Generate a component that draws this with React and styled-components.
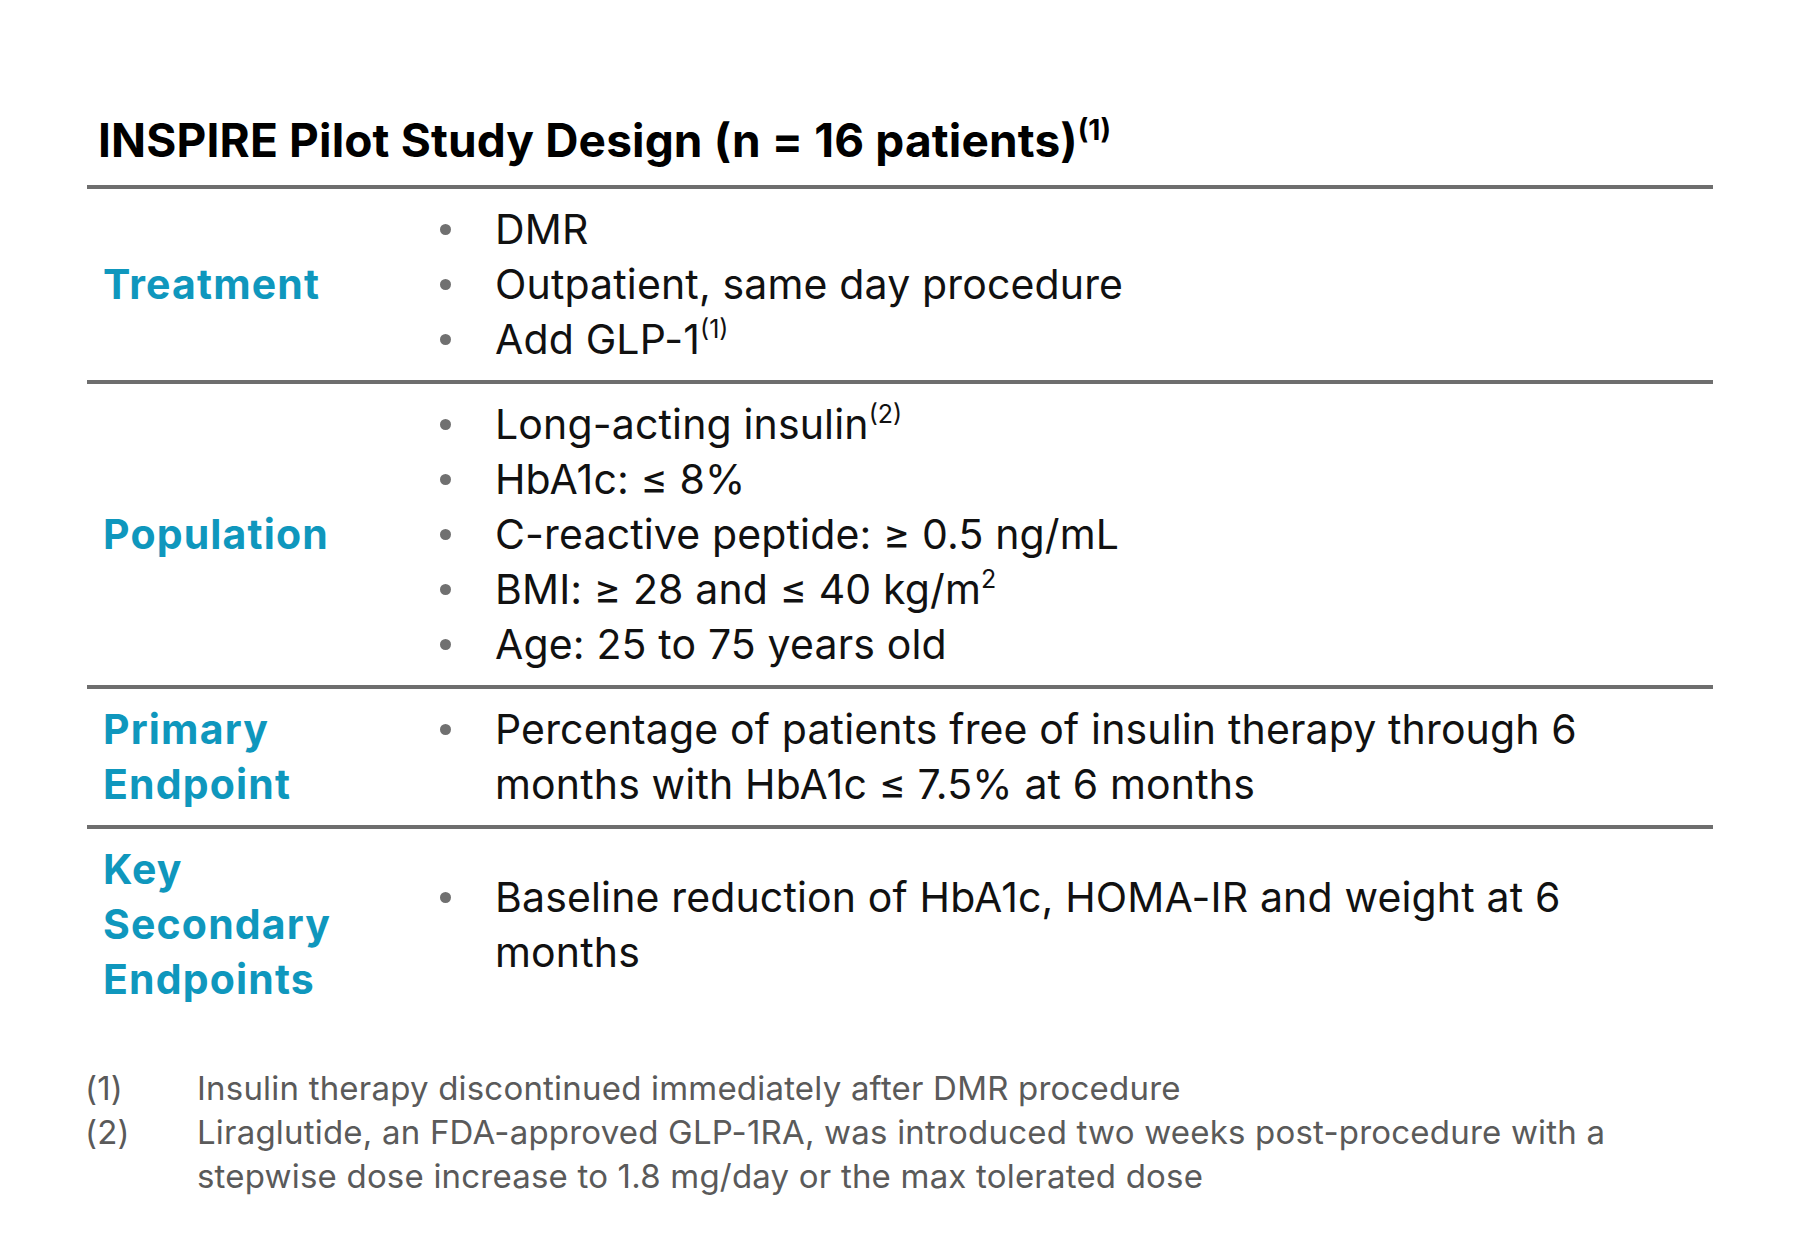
import React from 'react';
import styled, { createGlobalStyle } from 'styled-components';

const GlobalStyle = createGlobalStyle`
  html, body {
    margin: 0;
    padding: 0;
    background: #ffffff;
  }
  body {
    font-family: Inter, "Noto Sans", "Liberation Sans", sans-serif;
  }
`;

const Page = styled.div`
  width: 1800px;
  height: 1260px;
  box-sizing: border-box;
  padding: 113px 85px 0 85px;
  background: #ffffff;
  color: #111;
`;

const Title = styled.h1`
  margin: 0;
  padding-left: 13px;
  font-size: 46px;
  line-height: 54px;
  font-weight: 700;
  color: #000;
  letter-spacing: 0.15px;

  sup {
    font-size: 28px;
    line-height: 0;
    vertical-align: 17px;
    letter-spacing: 0;
  }
`;

const Table = styled.div`
  margin: 18px 2px 0 2px;
  border-top: 4px solid #6e6e6e;
`;

const Row = styled.div`
  display: grid;
  grid-template-columns: 335px 1fr;
  align-items: center;
  padding: 13px 0 13px 16px;
  border-bottom: ${(p) => (p.$last ? 'none' : '4px solid #6e6e6e')};
`;

const Label = styled.div`
  font-size: 41px;
  line-height: 55px;
  font-weight: 700;
  color: #0f97bd;
  letter-spacing: 1.15px;
`;

const List = styled.ul`
  list-style: none;
  margin: 0;
  padding: 0 60px 0 0;
`;

const Item = styled.li`
  display: flex;
  font-size: 41px;
  line-height: 55px;
  color: #111;
  letter-spacing: 0.15px;

  sup {
    font-size: 25px;
    line-height: 0;
    vertical-align: 16px;
    letter-spacing: 0;
  }
`;

const Bullet = styled.span`
  flex: 0 0 57px;
  position: relative;

  &::before {
    content: '';
    position: absolute;
    left: 2px;
    top: 22px;
    width: 11px;
    height: 11px;
    border-radius: 50%;
    background: #707070;
  }
`;

const Notes = styled.div`
  margin-top: 46px;
  display: grid;
  grid-template-columns: 112px 1fr;
  font-size: 33px;
  line-height: 44px;
  color: #5a5a5a;
  letter-spacing: 0.2px;
  padding-right: 95px;
`;

const rows = [
  {
    label: ['Treatment'],
    items: [
      'DMR',
      'Outpatient, same day procedure',
      <>Add GLP-1<sup>(1)</sup></>,
    ],
  },
  {
    label: ['Population'],
    items: [
      <>Long-acting insulin<sup>(2)</sup></>,
      'HbA1c: ≤ 8%',
      'C-reactive peptide: ≥ 0.5 ng/mL',
      <>BMI: ≥ 28 and ≤ 40 kg/m<sup>2</sup></>,
      'Age: 25 to 75 years old',
    ],
  },
  {
    label: ['Primary', 'Endpoint'],
    items: ['Percentage of patients free of insulin therapy through 6 months with HbA1c ≤ 7.5% at 6 months'],
  },
  {
    label: ['Key', 'Secondary', 'Endpoints'],
    items: ['Baseline reduction of HbA1c, HOMA-IR and weight at 6 months'],
  },
];

const App = () => (
  <Page>
    <GlobalStyle />
    <Title>
      INSPIRE Pilot Study Design (n = 16 patients)<sup>(1)</sup>
    </Title>

    <Table>
      {rows.map((row, i) => (
        <Row key={i} $last={i === rows.length - 1}>
          <Label>
            {row.label.map((l) => (
              <div key={l}>{l}</div>
            ))}
          </Label>
          <List>
            {row.items.map((item, j) => (
              <Item key={j}>
                <Bullet />
                <span>{item}</span>
              </Item>
            ))}
          </List>
        </Row>
      ))}
    </Table>

    <Notes>
      <div>(1)</div>
      <div>Insulin therapy discontinued immediately after DMR procedure</div>
      <div>(2)</div>
      <div>
        Liraglutide, an FDA-approved GLP-1RA, was introduced two weeks post-procedure with a
        stepwise dose increase to 1.8 mg/day or the max tolerated dose
      </div>
    </Notes>
  </Page>
);

export default App;
